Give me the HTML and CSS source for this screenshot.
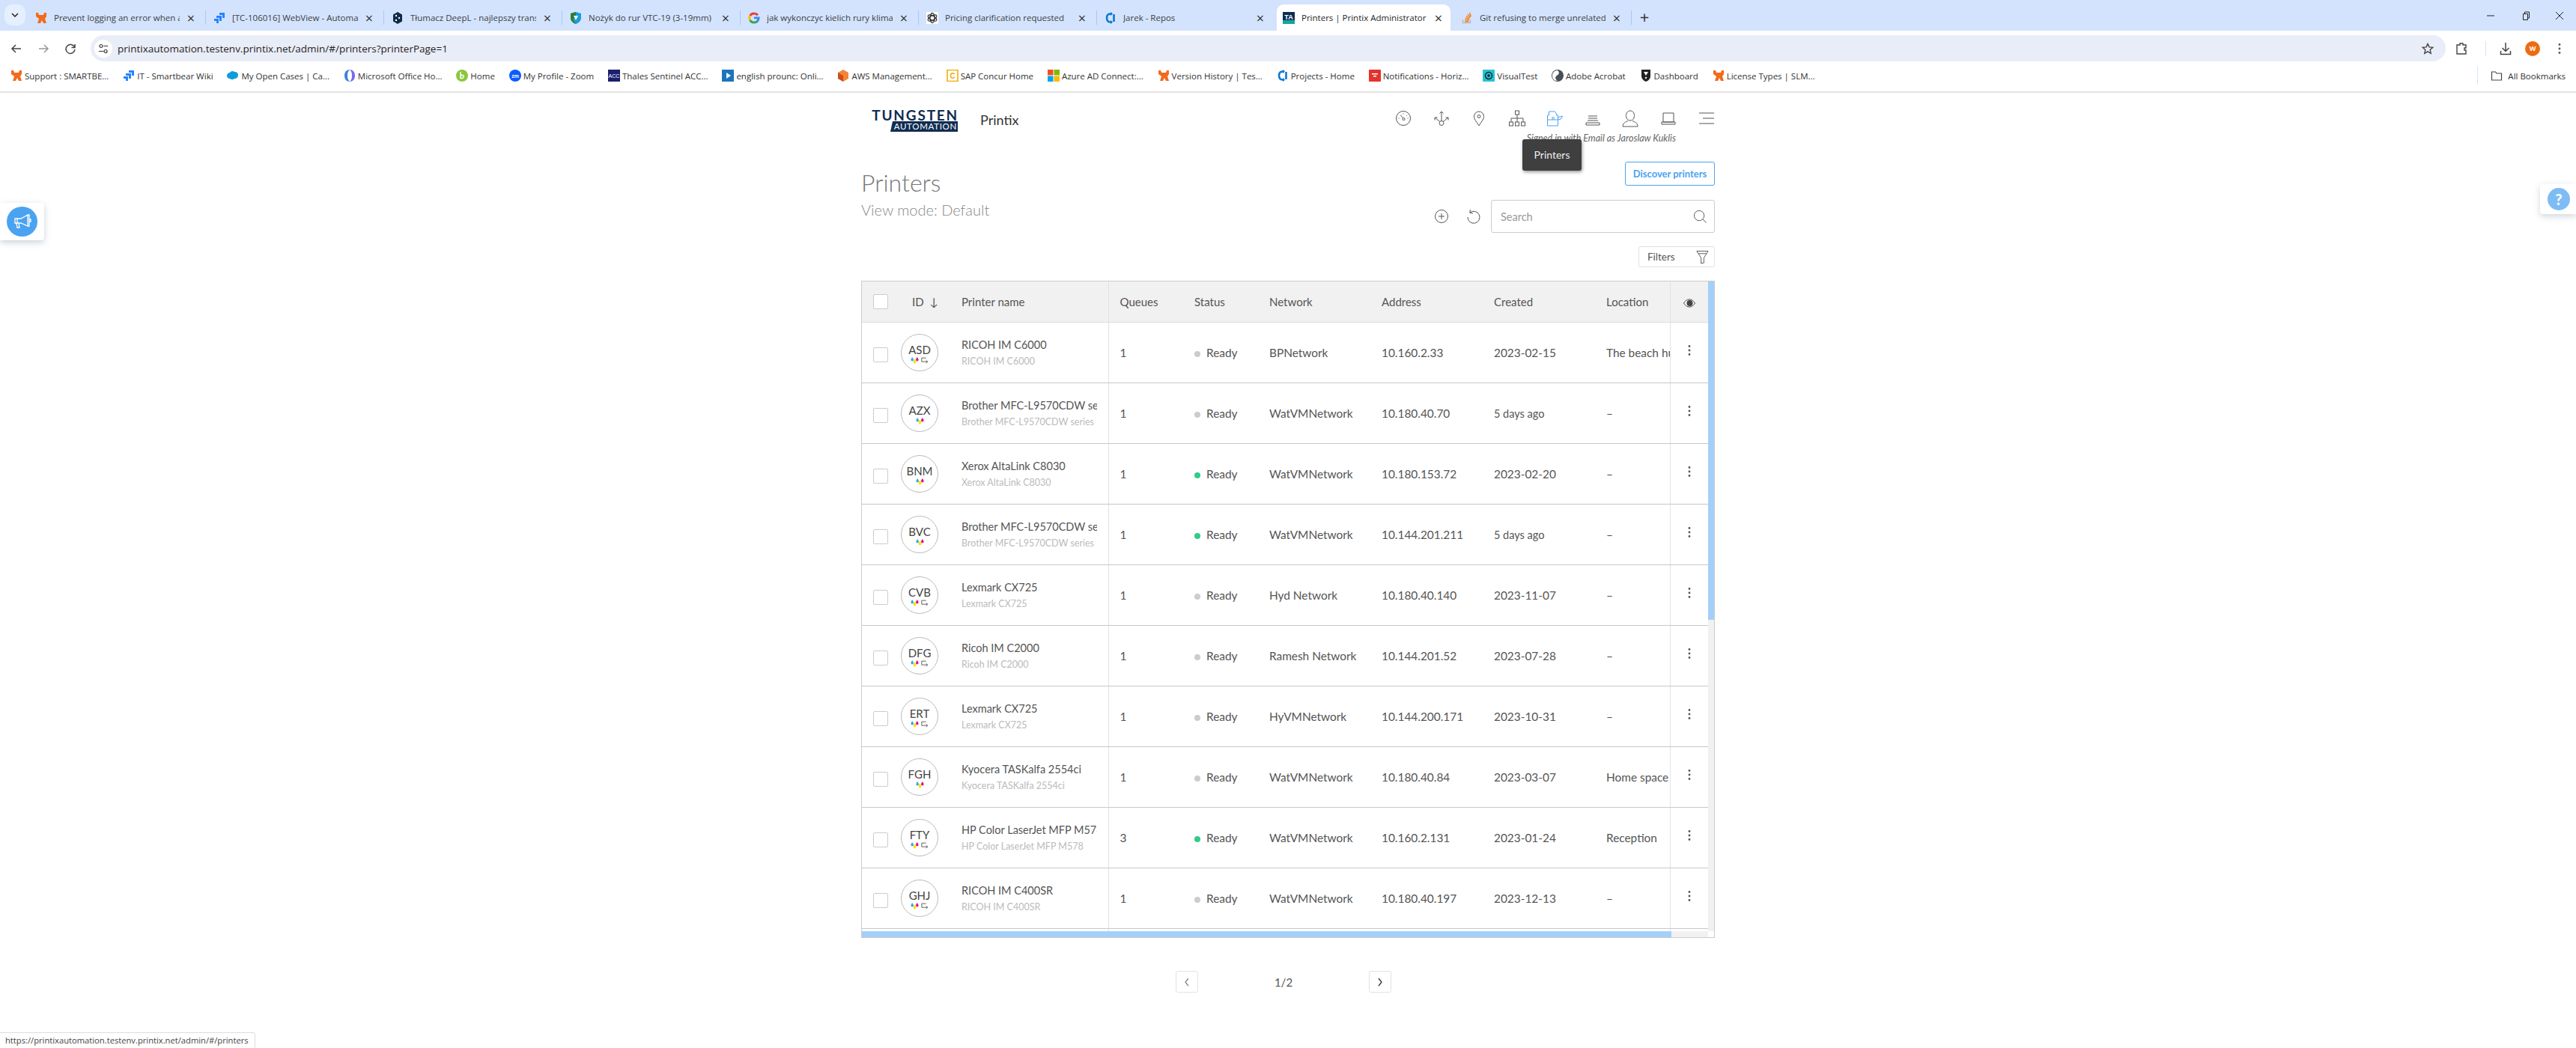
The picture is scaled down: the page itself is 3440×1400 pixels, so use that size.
FILE: index.html
```html
<!DOCTYPE html>
<html>
    <head>
        <meta charset="utf-8" />
        <title>Printers | Printix Administrator</title>
        <meta name="viewport" content="width=device-width, initial-scale=1" />
        <link rel="stylesheet" href="styles.css">
    </head>

    <body>
        <!-- icon sprite -->
        <svg class="sprite" xmlns="http://www.w3.org/2000/svg">
            <symbol id="fav-bear" viewBox="0 0 16 16"><path fill="#f26b1d" d="M1 1h3l1 3h6l1-3h3v5l-2 3 2 6h-4l-2-4-2 4H3l2-6-4-3z"/></symbol>
            <symbol id="fav-jira" viewBox="0 0 16 16"><path fill="#2684ff" d="M8 1h7v7h-3V4H8zM4 5h7v7H8V8H4zM1 9h6v6H4v-3H1z"/></symbol>
            <symbol id="fav-deepl" viewBox="0 0 16 16"><path fill="#0f2b46" d="M8 0l6 3.5v9L8 16l-6-3.5v-9z"/><circle cx="6" cy="5" r="1.2" fill="#fff"/><circle cx="6" cy="11" r="1.2" fill="#fff"/><circle cx="10" cy="8" r="1.2" fill="#fff"/></symbol>
            <symbol id="fav-shield" viewBox="0 0 16 16"><path fill="#1a9cd8" d="M1 2l7-2 7 2v6c0 4-4 7-7 8-3-1-7-4-7-8z"/><path fill="#2e7d32" d="M1 2l7-2v5l-4 5 4 6c-3-1-7-4-7-8z"/><path fill="#fff" d="M5 5h6l-3 6z"/></symbol>
            <symbol id="fav-google" viewBox="0 0 16 16"><path fill="none" stroke="#ea4335" stroke-width="3" d="M13 4.2A6.4 6.4 0 0 0 2.6 5"/><path fill="none" stroke="#fbbc05" stroke-width="3" d="M2.6 5a6.4 6.4 0 0 0 0 6"/><path fill="none" stroke="#34a853" stroke-width="3" d="M2.6 11a6.4 6.4 0 0 0 10.2 1"/><path fill="#4285f4" d="M8 6.600h7.500c.4 3-.6 5-2 6.400l-2.300-1.800c.7-.6 1.100-1.300 1.300-2H8z"/></symbol>
            <symbol id="fav-gpt" viewBox="0 0 16 16"><rect width="16" height="16" fill="#fff"/><g fill="none" stroke="#333" stroke-width="1.300"><ellipse cx="8" cy="8" rx="3" ry="6.500"/><ellipse cx="8" cy="8" rx="3" ry="6.500" transform="rotate(60 8 8)"/><ellipse cx="8" cy="8" rx="3" ry="6.500" transform="rotate(120 8 8)"/></g></symbol>
            <symbol id="fav-azure" viewBox="0 0 16 16"><path fill="none" stroke="#0a78d4" stroke-width="2.600" d="M10 2.500C5 2 3 4 3 8s2 6 7 5.500M12.500 3v10"/><path fill="#0a78d4" d="M8 0l3 2.500L8 5zM8 11l3 2.500L8 16z"/></symbol>
            <symbol id="fav-ta" viewBox="0 0 16 16"><rect width="16" height="16" fill="#0d2d52"/><rect y="11" width="16" height="5" fill="#16a5a0"/><text x="8" y="10" font-family="Liberation Sans" font-size="9" font-weight="700" fill="#fff" text-anchor="middle">TA</text></symbol>
            <symbol id="fav-so" viewBox="0 0 16 16"><path fill="none" stroke="#bbb" stroke-width="1.500" d="M2.500 10v4.500h10V10"/><path fill="none" stroke="#f48024" stroke-width="1.500" d="M5 12.800h5.500M5.200 10.500l5.400.6M5.800 8l5.200 1.500M7 5.300l4.700 2.800M9 3l3.500 4M11.500 1l1.800 5"/></symbol>
            <symbol id="fav-salesforce" viewBox="0 0 16 16"><path fill="#0d9dda" d="M4 4c1-2 4-3 6-1 2-.5 5 1 5 4s-2 5-5 5c-2 2-5 1-6 0-3 0-4-2-4-4s2-4 4-4z"/></symbol>
            <symbol id="fav-office" viewBox="0 0 16 16"><path fill="#7b68ee" d="M8 0c4 0 7 3 7 8s-3 8-7 8c2-2 3-4 3-8S10 2 8 0z"/><path fill="#3b82d6" d="M8 0C4 0 1 3 1 8s3 8 7 8c-2-2-3-4-3-8s1-6 3-8z"/></symbol>
            <symbol id="fav-home" viewBox="0 0 16 16"><circle cx="8" cy="8" r="8" fill="#8cc63f"/><path fill="none" stroke="#fff" stroke-width="1.500" d="M6 3v9M6 8c3-2 5 0 4 2s-3 2-4 1"/></symbol>
            <symbol id="fav-zoom" viewBox="0 0 16 16"><circle cx="8" cy="8" r="8" fill="#0b5cff"/><text x="8" y="10.500" font-family="Liberation Sans" font-size="7" font-weight="700" fill="#fff" text-anchor="middle">zm</text></symbol>
            <symbol id="fav-thales" viewBox="0 0 16 16"><rect width="16" height="16" fill="#1b1f6e"/><text x="8" y="11" font-family="Liberation Sans" font-size="7" fill="#fff" text-anchor="middle">ACC</text></symbol>
            <symbol id="fav-video" viewBox="0 0 16 16"><rect width="16" height="16" fill="#1b75bb"/><path fill="#fff" d="M6 4l6 4-6 4z"/></symbol>
            <symbol id="fav-aws" viewBox="0 0 16 16"><path fill="#f58536" d="M8 0l7 4v8l-7 4-7-4V4z"/><path fill="#c8511b" d="M8 8v8l-7-4V4z"/></symbol>
            <symbol id="fav-sap" viewBox="0 0 16 16"><rect x="1" y="0.500" width="14" height="15" fill="#fff" stroke="#f0ab00" stroke-width="1.500"/><text x="8" y="11.500" font-family="Liberation Sans" font-size="10" font-weight="700" fill="#f0ab00" text-anchor="middle">C</text></symbol>
            <symbol id="fav-ms" viewBox="0 0 16 16"><rect width="7.500" height="7.500" fill="#f25022"/><rect x="8.500" width="7.500" height="7.500" fill="#7fba00"/><rect y="8.500" width="7.500" height="7.500" fill="#00a4ef"/><rect x="8.500" y="8.500" width="7.500" height="7.500" fill="#ffb900"/></symbol>
            <symbol id="fav-notif" viewBox="0 0 16 16"><rect width="16" height="16" rx="1" fill="#e5322d"/><path fill="#fff" d="M4 5h8v1.500H4zM6 8h4v1.500H6z"/></symbol>
            <symbol id="fav-visual" viewBox="0 0 16 16"><rect width="16" height="16" rx="1" fill="#25c3d0"/><circle cx="8" cy="8" r="4.500" fill="none" stroke="#123" stroke-width="1.500"/><circle cx="8" cy="8" r="1.800" fill="#123"/></symbol>
            <symbol id="fav-adobe" viewBox="0 0 16 16"><circle cx="8" cy="8" r="8" fill="#4a4f55"/><path fill="#fff" d="M8 1c3 3 2 5-1 7s-2 5 1 7c-5 0-7-3-7-7s3-7 7-7z"/></symbol>
            <symbol id="fav-dash" viewBox="0 0 16 16"><path fill="#222" d="M2 0h12v9c0 3-3 6-6 7-3-1-6-4-6-7z"/><path fill="#fff" d="M5 3h6l-3 5zM6.500 10h3L8 13z"/></symbol>

            <symbol id="drops" viewBox="0 0 11 9">
                <path fill="#36a9e1" d="M2.200 0c.8 1.500 1.800 2.500 1.800 3.800a1.800 1.800 0 0 1-3.600 0C.4 2.500 1.400 1.500 2.200 0z"/>
                <path fill="#ffe100" d="M5.500 2.500c.8 1.500 1.800 2.500 1.800 4.200a1.800 1.800 0 0 1-3.600 0c0-1.700 1-2.700 1.800-4.200z"/>
                <path fill="#e5127d" d="M8.800 0c.8 1.500 1.800 2.500 1.800 3.800a1.800 1.800 0 0 1-3.600 0c0-1.300 1-2.300 1.800-3.800z"/>
            </symbol>
            <symbol id="swap" viewBox="0 0 12 10"><path fill="none" stroke="#555" stroke-width="1.100" d="M8 1H1v6h9.500M8 4.800l2.500 2.200L8 9.200"/></symbol>
            <symbol id="kebab" viewBox="0 0 4 16"><circle cx="2" cy="2.500" r="1.400" fill="#555"/><circle cx="2" cy="8" r="1.400" fill="#555"/><circle cx="2" cy="13.500" r="1.400" fill="#555"/></symbol>
        </svg>

        <div class="tabstrip">
            <div class="tab-search"><svg width="10" height="6" viewBox="0 0 10 6"><path d="M1 1l4 4 4-4" fill="none" stroke="#222" stroke-width="1.500"/></svg></div>
            <div class="tab"><svg class="fav"><use href="#fav-bear"/></svg><span class="tab-title">Prevent logging an error when a</span><span class="tab-close">×</span></div>
            <div class="tab"><svg class="fav"><use href="#fav-jira"/></svg><span class="tab-title">[TC-106016] WebView - Automa</span><span class="tab-close">×</span></div>
            <div class="tab"><svg class="fav"><use href="#fav-deepl"/></svg><span class="tab-title">Tłumacz DeepL - najlepszy trans</span><span class="tab-close">×</span></div>
            <div class="tab"><svg class="fav"><use href="#fav-shield"/></svg><span class="tab-title">Nożyk do rur VTC-19 (3-19mm)</span><span class="tab-close">×</span></div>
            <div class="tab"><svg class="fav"><use href="#fav-google"/></svg><span class="tab-title">jak wykonczyc kielich rury klima</span><span class="tab-close">×</span></div>
            <div class="tab"><svg class="fav"><use href="#fav-gpt"/></svg><span class="tab-title">Pricing clarification requested</span><span class="tab-close">×</span></div>
            <div class="tab no-sep"><svg class="fav"><use href="#fav-azure"/></svg><span class="tab-title">Jarek - Repos</span><span class="tab-close">×</span></div>
            <div class="tab active"><svg class="fav"><use href="#fav-ta"/></svg><span class="tab-title">Printers | Printix Administrator</span><span class="tab-close">×</span></div>
            <div class="tab"><svg class="fav"><use href="#fav-so"/></svg><span class="tab-title">Git refusing to merge unrelated</span><span class="tab-close">×</span></div>
            <div class="tab-new">+</div>
            <div class="window-controls">
                <svg width="12" height="12" viewBox="0 0 12 12"><path d="M1 6h10" stroke="#222" fill="none"/></svg>
                <svg width="12" height="12" viewBox="0 0 12 12"><path d="M3.500 3.500h6v8h-6zM5.500 3.500V1h6v8h-2" stroke="#222" fill="none"/></svg>
                <svg width="12" height="12" viewBox="0 0 12 12"><path d="M1 1l10 10M11 1L1 11" stroke="#222" fill="none"/></svg>
            </div>
        </div>

        <div class="toolbar">
            <div class="nav-buttons">
                <svg width="16" height="16" viewBox="0 0 16 16"><path d="M14 8H2M7 3L2 8l5 5" fill="none" stroke="#444" stroke-width="1.500"/></svg>
                <svg width="16" height="16" viewBox="0 0 16 16"><path d="M2 8h12M9 3l5 5-5 5" fill="none" stroke="#999" stroke-width="1.500"/></svg>
                <svg width="16" height="16" viewBox="0 0 16 16"><path d="M13.500 6A6 6 0 1 0 14 9M14 2v4.500H9.500" fill="none" stroke="#444" stroke-width="1.500"/></svg>
            </div>
            <div class="omnibox">
                <span class="site-info"><svg width="14" height="14" viewBox="0 0 14 14"><circle cx="4" cy="3.500" r="2" fill="none" stroke="#333" stroke-width="1.200"/><circle cx="10" cy="10.500" r="2" fill="none" stroke="#333" stroke-width="1.200"/><path d="M7.500 3.500H13M1 10.500h6" stroke="#333" stroke-width="1.200"/></svg></span>
                <span class="url">printixautomation.testenv.printix.net/admin/#/printers?printerPage=1</span>
                <svg class="star" width="16" height="16" viewBox="0 0 16 16"><path d="M8 1.500l2 4.400 4.700.5-3.500 3.200 1 4.700L8 11.900l-4.200 2.400 1-4.700L1.300 6.400 6 5.900z" fill="none" stroke="#444" stroke-width="1.400"/></svg>
            </div>
            <div class="toolbar-actions">
                <svg width="16" height="18" viewBox="0 0 16 18"><path d="M2 4h4V2h4v2h4v4h-2v3h2v5H2z" fill="none" stroke="#444" stroke-width="1.400"/></svg>
                <span class="toolbar-sep"></span>
                <svg width="16" height="18" viewBox="0 0 16 18"><path d="M8 1v11M3.500 8L8 12.500 12.500 8M1.500 12v4.500h13V12" fill="none" stroke="#444" stroke-width="1.500"/></svg>
                <span class="profile">W</span>
                <svg width="4" height="16"><use href="#kebab"/></svg>
            </div>
        </div>

        <div class="bookmarks">
            <div class="bookmark"><svg class="fav"><use href="#fav-bear"/></svg>Support : SMARTBE...</div>
            <div class="bookmark"><svg class="fav"><use href="#fav-jira"/></svg>IT - Smartbear Wiki</div>
            <div class="bookmark"><svg class="fav"><use href="#fav-salesforce"/></svg>My Open Cases | Ca...</div>
            <div class="bookmark"><svg class="fav"><use href="#fav-office"/></svg>Microsoft Office Ho...</div>
            <div class="bookmark"><svg class="fav"><use href="#fav-home"/></svg>Home</div>
            <div class="bookmark"><svg class="fav"><use href="#fav-zoom"/></svg>My Profile - Zoom</div>
            <div class="bookmark"><svg class="fav"><use href="#fav-thales"/></svg>Thales Sentinel ACC...</div>
            <div class="bookmark"><svg class="fav"><use href="#fav-video"/></svg>english prounc: Onli...</div>
            <div class="bookmark"><svg class="fav"><use href="#fav-aws"/></svg>AWS Management...</div>
            <div class="bookmark"><svg class="fav"><use href="#fav-sap"/></svg>SAP Concur Home</div>
            <div class="bookmark"><svg class="fav"><use href="#fav-ms"/></svg>Azure AD Connect:...</div>
            <div class="bookmark"><svg class="fav"><use href="#fav-bear"/></svg>Version History | Tes...</div>
            <div class="bookmark"><svg class="fav"><use href="#fav-azure"/></svg>Projects - Home</div>
            <div class="bookmark"><svg class="fav"><use href="#fav-notif"/></svg>Notifications - Horiz...</div>
            <div class="bookmark"><svg class="fav"><use href="#fav-visual"/></svg>VisualTest</div>
            <div class="bookmark"><svg class="fav"><use href="#fav-adobe"/></svg>Adobe Acrobat</div>
            <div class="bookmark"><svg class="fav"><use href="#fav-dash"/></svg>Dashboard</div>
            <div class="bookmark"><svg class="fav"><use href="#fav-bear"/></svg>License Types | SLM...</div>
            <div class="all-bookmarks">
                <svg class="fav" viewBox="0 0 16 16"><path d="M1.500 3h5l1.500 2h6.500v9h-13z" fill="none" stroke="#444" stroke-width="1.200"/></svg>All Bookmarks
            </div>
        </div>

        <div class="feedback-tab">
            <span class="feedback-icon">
                <svg width="26" height="22" viewBox="0 0 26 22"><path d="M3 7h8l9-5v15l-9-4H3zM5 13l1 6h3l-1-6M20 2h2v15h-2M22 8h2v3h-2M6 7v6" fill="none" stroke="#fff" stroke-width="1.300"/></svg>
            </span>
        </div>
        <div class="help-tab"><span class="help-icon">?</span></div>

        <main class="content">
            <header class="site-header">
                <div class="logo">
                    <span class="logo-top">TUNGSTEN</span>
                    <span class="logo-bottom">AUTOMATION</span>
                </div>
                <span class="product">Printix</span>
                <nav class="main-nav">
                    <svg viewBox="0 0 24 24"><circle cx="12" cy="12" r="9.500"/><circle cx="12.500" cy="13" r="1.600"/><path d="M11.500 11.500L8 7.500M5.500 12h1M12 5.500v1M17 8l-.8.8M18.500 12h-1"/></svg>
                    <svg viewBox="0 0 24 24"><circle cx="12" cy="18.500" r="3"/><path d="M12 15.500V3M9.500 5.500L12 3l2.500 2.500M9.800 16.500L3 11M3 14.500V11h3.500M14.200 16.500L21 11M21 14.500V11h-3.500"/></svg>
                    <svg viewBox="0 0 24 24"><path d="M12 22c-2-4-6.500-8-6.500-12.500a6.500 6.500 0 0 1 13 0C18.500 14 14 18 12 22z"/><circle cx="12" cy="9.500" r="2"/></svg>
                    <svg viewBox="0 0 24 24"><rect x="9.500" y="2" width="5" height="5"/><rect x="1.500" y="17" width="5" height="5"/><rect x="9.500" y="17" width="5" height="5"/><rect x="17.500" y="17" width="5" height="5"/><path d="M12 7v10M4 17v-5h16v5"/></svg>
                    <svg class="nav-active" viewBox="0 0 24 24"><path d="M2.500 22V8h2V3h8l2 3v2h2v14zM2.500 14h14M16.500 11l6-2-2 4-4 1"/><path d="M8 11h4M8 13h4"/></svg>
                    <svg viewBox="0 0 24 24"><path d="M6 9h12M6 12h12M5 15h14M3 18h18v3H3z"/></svg>
                    <svg viewBox="0 0 24 24"><path d="M12 2c3.500 0 5.500 3 5.500 6.500S15.500 15 12 15s-5.500-3-5.500-6.500S8.500 2 12 2zM2 23c0-5 4-6 7-7.500M22 23c0-5-4-6-7-7.500M2 23h20"/></svg>
                    <svg viewBox="0 0 24 24"><path d="M5 5h14v12H5zM3 17h18v3H3z"/></svg>
                    <svg viewBox="0 0 24 24"><path d="M3 5h20M8 12h15M3 19h20"/></svg>
                </nav>
            </header>
            <p class="signed-in">Signed in with Email as Jaroslaw Kuklis</p>
            <div class="tooltip">Printers</div>

            <section class="title-row">
                <div class="title-block">
                    <h1>Printers</h1>
                    <p class="view-mode">View mode: Default</p>
                </div>
                <div class="title-actions">
                    <button class="btn-discover">Discover printers</button>
                    <div class="search-row">
                        <svg class="tool-icon" viewBox="0 0 20 20"><circle cx="10" cy="10" r="8.500"/><path d="M10 6v8M6 10h8"/></svg>
                        <svg class="tool-icon" viewBox="0 0 20 20"><path d="M6 5a8 8 0 1 1-3 6M6.500 1L5.800 5.200 10 6"/></svg>
                        <div class="search-box">
                            <span>Search</span>
                            <svg viewBox="0 0 20 20"><circle cx="8.500" cy="8.500" r="7"/><path d="M13.500 13.500l5 5"/></svg>
                        </div>
                    </div>
                    <button class="btn-filters">Filters
                        <svg viewBox="0 0 18 20"><path d="M1 1.500h16L11 11v7l-4 1V11zM3.500 5h11"/></svg>
                    </button>
                </div>
            </section>

            <div class="grid-frame">
                <div class="grid-main">
                    <div class="grid-scroll">
                        <table class="printers">
                            <colgroup>
                                <col class="col-check" /><col class="col-avatar" /><col class="col-name" />
                                <col class="col-100" /><col class="col-100" /><col class="col-150" />
                                <col class="col-150" /><col class="col-150" /><col class="col-100" /><col class="col-actions" />
                            </colgroup>
                            <thead>
                                <tr>
                                    <th><span class="checkbox"></span></th>
                                    <th class="th-id">ID <span class="sort">↓</span></th>
                                    <th class="cell-name">Printer name</th>
                                    <th>Queues</th><th>Status</th><th>Network</th><th>Address</th><th>Created</th><th>Location</th>
                                    <th class="cell-actions"><svg class="eye" viewBox="0 0 16 12"><path d="M.5 6C3 2 5.500 1 8 1s5 1 7.500 5C13 10 10.500 11 8 11S3 10 .5 6z" fill="none" stroke="#444"/><circle cx="8.500" cy="6" r="4" fill="#444"/></svg></th>
                                </tr>
                            </thead>
                            <tbody>
                                <tr>
                                    <td><span class="checkbox"></span></td>
                                    <td><div class="avatar">ASD<div class="avatar-icons"><svg class="drops"><use href="#drops"/></svg><svg class="swap"><use href="#swap"/></svg></div></div></td>
                                    <td class="cell-name"><div class="name">RICOH IM C6000</div><div class="model">RICOH IM C6000</div></td>
                                    <td>1</td><td><span class="dot"></span>Ready</td><td>BPNetwork</td><td>10.160.2.33</td><td>2023-02-15</td><td class="clip">The beach hut</td>
                                    <td class="cell-actions"><svg class="kebab"><use href="#kebab"/></svg></td>
                                </tr>
                                <tr>
                                    <td><span class="checkbox"></span></td>
                                    <td><div class="avatar">AZX<div class="avatar-icons"><svg class="drops"><use href="#drops"/></svg></div></div></td>
                                    <td class="cell-name"><div class="name">Brother MFC-L9570CDW series</div><div class="model">Brother MFC-L9570CDW series</div></td>
                                    <td>1</td><td><span class="dot"></span>Ready</td><td>WatVMNetwork</td><td>10.180.40.70</td><td class="small">5 days ago</td><td>–</td>
                                    <td class="cell-actions"><svg class="kebab"><use href="#kebab"/></svg></td>
                                </tr>
                                <tr>
                                    <td><span class="checkbox"></span></td>
                                    <td><div class="avatar">BNM<div class="avatar-icons"><svg class="drops"><use href="#drops"/></svg></div></div></td>
                                    <td class="cell-name"><div class="name">Xerox AltaLink C8030</div><div class="model">Xerox AltaLink C8030</div></td>
                                    <td>1</td><td><span class="dot online"></span>Ready</td><td>WatVMNetwork</td><td>10.180.153.72</td><td>2023-02-20</td><td>–</td>
                                    <td class="cell-actions"><svg class="kebab"><use href="#kebab"/></svg></td>
                                </tr>
                                <tr>
                                    <td><span class="checkbox"></span></td>
                                    <td><div class="avatar">BVC<div class="avatar-icons"><svg class="drops"><use href="#drops"/></svg></div></div></td>
                                    <td class="cell-name"><div class="name">Brother MFC-L9570CDW series</div><div class="model">Brother MFC-L9570CDW series</div></td>
                                    <td>1</td><td><span class="dot online"></span>Ready</td><td>WatVMNetwork</td><td>10.144.201.211</td><td class="small">5 days ago</td><td>–</td>
                                    <td class="cell-actions"><svg class="kebab"><use href="#kebab"/></svg></td>
                                </tr>
                                <tr>
                                    <td><span class="checkbox"></span></td>
                                    <td><div class="avatar">CVB<div class="avatar-icons"><svg class="drops"><use href="#drops"/></svg><svg class="swap"><use href="#swap"/></svg></div></div></td>
                                    <td class="cell-name"><div class="name">Lexmark CX725</div><div class="model">Lexmark CX725</div></td>
                                    <td>1</td><td><span class="dot"></span>Ready</td><td>Hyd Network</td><td>10.180.40.140</td><td>2023-11-07</td><td>–</td>
                                    <td class="cell-actions"><svg class="kebab"><use href="#kebab"/></svg></td>
                                </tr>
                                <tr>
                                    <td><span class="checkbox"></span></td>
                                    <td><div class="avatar">DFG<div class="avatar-icons"><svg class="drops"><use href="#drops"/></svg><svg class="swap"><use href="#swap"/></svg></div></div></td>
                                    <td class="cell-name"><div class="name">Ricoh IM C2000</div><div class="model">Ricoh IM C2000</div></td>
                                    <td>1</td><td><span class="dot"></span>Ready</td><td>Ramesh Network</td><td>10.144.201.52</td><td>2023-07-28</td><td>–</td>
                                    <td class="cell-actions"><svg class="kebab"><use href="#kebab"/></svg></td>
                                </tr>
                                <tr>
                                    <td><span class="checkbox"></span></td>
                                    <td><div class="avatar">ERT<div class="avatar-icons"><svg class="drops"><use href="#drops"/></svg><svg class="swap"><use href="#swap"/></svg></div></div></td>
                                    <td class="cell-name"><div class="name">Lexmark CX725</div><div class="model">Lexmark CX725</div></td>
                                    <td>1</td><td><span class="dot"></span>Ready</td><td>HyVMNetwork</td><td>10.144.200.171</td><td>2023-10-31</td><td>–</td>
                                    <td class="cell-actions"><svg class="kebab"><use href="#kebab"/></svg></td>
                                </tr>
                                <tr>
                                    <td><span class="checkbox"></span></td>
                                    <td><div class="avatar">FGH<div class="avatar-icons"><svg class="drops"><use href="#drops"/></svg></div></div></td>
                                    <td class="cell-name"><div class="name">Kyocera TASKalfa 2554ci</div><div class="model">Kyocera TASKalfa 2554ci</div></td>
                                    <td>1</td><td><span class="dot"></span>Ready</td><td>WatVMNetwork</td><td>10.180.40.84</td><td>2023-03-07</td><td class="clip">Home space</td>
                                    <td class="cell-actions"><svg class="kebab"><use href="#kebab"/></svg></td>
                                </tr>
                                <tr>
                                    <td><span class="checkbox"></span></td>
                                    <td><div class="avatar">FTY<div class="avatar-icons"><svg class="drops"><use href="#drops"/></svg><svg class="swap"><use href="#swap"/></svg></div></div></td>
                                    <td class="cell-name"><div class="name">HP Color LaserJet MFP M578</div><div class="model">HP Color LaserJet MFP M578</div></td>
                                    <td>3</td><td><span class="dot online"></span>Ready</td><td>WatVMNetwork</td><td>10.160.2.131</td><td>2023-01-24</td><td>Reception</td>
                                    <td class="cell-actions"><svg class="kebab"><use href="#kebab"/></svg></td>
                                </tr>
                                <tr>
                                    <td><span class="checkbox"></span></td>
                                    <td><div class="avatar">GHJ<div class="avatar-icons"><svg class="drops"><use href="#drops"/></svg><svg class="swap"><use href="#swap"/></svg></div></div></td>
                                    <td class="cell-name"><div class="name">RICOH IM C400SR</div><div class="model">RICOH IM C400SR</div></td>
                                    <td>1</td><td><span class="dot"></span>Ready</td><td>WatVMNetwork</td><td>10.180.40.197</td><td>2023-12-13</td><td>–</td>
                                    <td class="cell-actions"><svg class="kebab"><use href="#kebab"/></svg></td>
                                </tr>
                                <tr class="row-stub"><td></td><td></td><td class="cell-name"></td><td></td><td></td><td></td><td></td><td></td><td></td><td class="cell-actions"></td></tr>
                            </tbody>
                        </table>
                    </div>
                    <div class="vscroll"><div class="vscroll-thumb"></div></div>
                </div>
                <div class="hscroll"><div class="hscroll-thumb"></div></div>
            </div>

            <div class="pagination">
                <button class="page-btn"><svg viewBox="0 0 8 12"><path d="M6 1L2 6l4 5" fill="none" stroke="#888" stroke-width="1.300"/></svg></button>
                <span class="page-label">1/2</span>
                <button class="page-btn"><svg viewBox="0 0 8 12"><path d="M2 1l4 5-4 5" fill="none" stroke="#333" stroke-width="1.300"/></svg></button>
            </div>
        </main>

        <div class="status-link">https://printixautomation.testenv.printix.net/admin/#/printers</div>
    </body>
</html>
```

FILE: styles.css
```css
html,
body {
    margin: 0;
    padding: 0;
    height: 1400px;
    overflow: hidden;
    background: #fff;
    font-family: 'Lato', sans-serif;
    color: #555;
}

.sprite {
    display: none;
}

.fav {
    width: 16px;
    height: 16px;
    flex: none;
}

/* browser chrome */
.tabstrip {
    height: 41px;
    background: #d3e3fd;
    display: flex;
    align-items: flex-end;
    font-family: 'Open Sans', sans-serif;
    font-size: 11.500px;
    color: #3c4043;
}

.tab-search {
    width: 28px;
    height: 28px;
    margin: 0 3px 7px 6px;
    border-radius: 10px;
    background: #e6effd;
    display: flex;
    align-items: center;
    justify-content: center;
    flex: none;
}

.tab {
    width: 238px;
    height: 35px;
    box-sizing: border-box;
    padding: 0 10px;
    display: flex;
    align-items: center;
    gap: 9px;
    flex: none;
    position: relative;
}

.tab::after {
    content: '';
    position: absolute;
    right: 0;
    top: 8px;
    height: 19px;
    width: 1px;
    background: #a8c7fa;
}

.tab.no-sep::after,
.tab.active::after {
    display: none;
}

.tab.active {
    background: #fff;
    border-radius: 9px 9px 0 0;
    width: 232px;
    margin: 0 4px 0 2px;
    padding: 0 8px;
    color: #1f1f1f;
}

.tab-title {
    width: 168px;
    overflow: hidden;
    white-space: nowrap;
    flex: none;
}

.tab-close {
    width: 12px;
    font-size: 18px;
    line-height: 12px;
    text-align: center;
    color: #333;
}

.tab-new {
    width: 34px;
    height: 35px;
    font-size: 22px;
    line-height: 33px;
    text-align: center;
    color: #333;
}

.window-controls {
    margin-left: auto;
    height: 41px;
    display: flex;
    align-items: center;
    gap: 34px;
    padding-right: 16px;
}

.toolbar {
    height: 41px;
    display: flex;
    align-items: flex-start;
    padding-top: 6px;
    box-sizing: border-box;
    border-radius: 10px 10px 0 0;
}

.nav-buttons {
    width: 121px;
    height: 35px;
    box-sizing: border-box;
    padding: 0 19px 0 14px;
    display: flex;
    align-items: center;
    justify-content: space-between;
    flex: none;
}

.omnibox {
    width: 3145px;
    height: 35px;
    background: #e9edf7;
    border-radius: 18px;
    display: flex;
    align-items: center;
    box-sizing: border-box;
    padding: 0 16px 0 5px;
    flex: none;
    font-family: 'Open Sans', sans-serif;
    font-size: 13.500px;
    color: #1f1f1f;
}

.site-info {
    width: 24px;
    height: 24px;
    border-radius: 50%;
    background: #fff;
    display: flex;
    align-items: center;
    justify-content: center;
    margin-right: 7px;
}

.star {
    margin-left: auto;
}

.toolbar-actions {
    flex: 1;
    height: 35px;
    display: flex;
    align-items: center;
    padding-left: 13px;
}

.toolbar-sep {
    width: 1px;
    height: 20px;
    background: #d3e3fd;
    margin: 0 18px 0 24px;
}

.profile {
    width: 20px;
    height: 20px;
    border-radius: 50%;
    background: #ec6c13;
    color: #fff;
    font: 700 9px 'Open Sans', sans-serif;
    text-align: center;
    line-height: 20px;
    margin: 0 24px 0 18px;
}

.bookmarks {
    height: 42px;
    box-sizing: border-box;
    border-bottom: 2px solid #e3e3e3;
    padding: 0 0 2px 14px;
    display: flex;
    align-items: center;
    gap: 18.800px;
    font-family: 'Open Sans', sans-serif;
    font-size: 11.500px;
    color: #333;
}

.bookmark {
    display: flex;
    align-items: center;
    gap: 3px;
    white-space: nowrap;
}

.all-bookmarks {
    margin-left: auto;
    margin-right: 14px;
    display: flex;
    align-items: center;
    gap: 7px;
    border-left: 1px solid #d3e3fd;
    padding: 4px 0 4px 17px;
}

/* floating side widgets */
.feedback-tab {
    position: absolute;
    left: 0;
    top: 271px;
    width: 59px;
    height: 50px;
    background: #fff;
    border-radius: 0 4px 4px 0;
    box-shadow: 0 3px 8px rgba(70, 90, 120, 0.28);
    display: flex;
    align-items: center;
}

.feedback-icon {
    margin-left: 9px;
    width: 41px;
    height: 40px;
    border-radius: 50%;
    background: #4aa3f0;
    display: flex;
    align-items: center;
    justify-content: center;
}

.help-tab {
    position: absolute;
    right: 0;
    top: 246px;
    width: 48px;
    height: 40px;
    background: #fff;
    border-radius: 4px 0 0 4px;
    box-shadow: 0 3px 8px rgba(70, 90, 120, 0.25);
    display: flex;
    align-items: center;
}

.help-icon {
    margin-left: 10px;
    width: 30px;
    height: 30px;
    border-radius: 50%;
    background: #7ebcf5;
    color: #fff;
    font: 900 20px/30px 'Lato', sans-serif;
    text-align: center;
}

/* page */
.content {
    width: 1140px;
    margin: 0 auto;
    position: relative;
}

.site-header {
    height: 52px;
    box-sizing: border-box;
    padding: 23px 0 0 11px;
    display: flex;
    align-items: flex-start;
}

.logo {
    width: 118px;
    height: 29px;
    display: flex;
    flex-direction: column;
    align-items: flex-end;
    flex: none;
}

.logo-top {
    font: 700 19px/14px 'Lato', sans-serif;
    color: #0f2d52;
    letter-spacing: 1.800px;
    margin-right: -1px;
}

.logo-bottom {
    margin-top: 1px;
    width: 90px;
    height: 14px;
    background: #0f2d52;
    color: #fff;
    font: 400 11.500px/14px 'Lato', sans-serif;
    letter-spacing: 0.700px;
    text-align: right;
    padding-right: 1px;
    box-sizing: border-box;
    clip-path: polygon(3px 0, 100% 0, 100% 100%, 0 100%);
}

.product {
    margin-left: 30px;
    font-size: 18px;
    line-height: 26px;
    color: #333;
}

.main-nav {
    margin-left: auto;
    margin-top: -1px;
    display: flex;
    gap: 26.500px;
}

.main-nav svg {
    width: 24px;
    height: 24px;
    fill: none;
    stroke: #555;
    stroke-width: 1;
}

.main-nav .nav-active {
    stroke: #4aa3f0;
}

.signed-in {
    margin: 0;
    height: 18px;
    padding-right: 52px;
    text-align: right;
    font-size: 12.500px;
    line-height: 18px;
    font-style: italic;
    color: #666;
}

.tooltip {
    position: absolute;
    left: 883px;
    top: 62px;
    width: 79px;
    height: 42px;
    background: #3f3f3f;
    color: #eee;
    border-radius: 3px;
    font-size: 14px;
    line-height: 42px;
    text-align: center;
    box-shadow: 1px 2px 4px rgba(0, 0, 0, 0.4);
}

.title-row {
    margin-top: 22px;
    display: flex;
    justify-content: space-between;
}

.title-block {
    padding-top: 5px;
}

h1 {
    margin: 0;
    font-size: 32px;
    line-height: 46px;
    font-weight: 300;
    color: #777;
}

.view-mode {
    margin: 0;
    font-size: 20px;
    line-height: 26px;
    font-weight: 300;
    color: #888;
}

.title-actions {
    display: flex;
    flex-direction: column;
    align-items: flex-end;
    padding-bottom: 18px;
}

button {
    font-family: inherit;
    background: #fff;
    cursor: pointer;
}

.btn-discover {
    width: 120px;
    height: 32px;
    padding: 0;
    border: 1px solid #4aa3f0;
    border-radius: 3px;
    color: #4aa3f0;
    font-size: 13px;
    font-weight: 700;
}

.search-row {
    margin-top: 19px;
    display: flex;
    align-items: center;
}

.tool-icon {
    width: 20px;
    height: 20px;
    margin-right: 22px;
    fill: none;
    stroke: #555;
    stroke-width: 1;
}

.tool-icon + .tool-icon {
    margin-right: 14px;
}

.search-box {
    width: 299px;
    height: 44px;
    box-sizing: border-box;
    border: 1px solid #ccc;
    border-radius: 3px;
    display: flex;
    align-items: center;
    justify-content: space-between;
    padding: 0 9px 0 12px;
    font-size: 14.500px;
    color: #999;
}

.search-box svg {
    width: 19px;
    height: 19px;
    fill: none;
    stroke: #555;
    stroke-width: 1;
}

.btn-filters {
    margin-top: 18px;
    width: 102px;
    height: 28px;
    box-sizing: border-box;
    border: 1px solid #e2e2e2;
    border-radius: 2px;
    padding: 0 7px 0 11px;
    display: flex;
    align-items: center;
    justify-content: space-between;
    font-size: 13.500px;
    color: #555;
}

.btn-filters svg {
    width: 17px;
    height: 19px;
    fill: none;
    stroke: #555;
    stroke-width: 1;
}

/* printers grid */
.grid-frame {
    height: 878px;
    box-sizing: border-box;
    border: 1px solid #ccc;
    display: flex;
    flex-direction: column;
}

.grid-main {
    height: 868px;
    display: flex;
}

.grid-scroll {
    width: 1130px;
    overflow: hidden;
}

.printers {
    width: 1130px;
    table-layout: fixed;
    border-collapse: collapse;
    font-size: 15.400px;
    color: #555;
}

.col-check { width: 40px; }
.col-avatar { width: 78px; }
.col-name { width: 211px; }
.col-100 { width: 100px; }
.col-150 { width: 150px; }
.col-actions { width: 51px; }

.printers th,
.printers td {
    padding: 0 0 0 15px;
    text-align: left;
    white-space: nowrap;
    overflow: hidden;
}

.printers th {
    height: 54px;
    background: #f1f1f1;
    font-size: 15px;
    font-weight: 400;
    border-bottom: 1px solid #ddd;
}

.printers td {
    height: 80px;
    border-bottom: 1px solid #c8c8c8;
}

.printers .cell-name {
    padding-right: 15px;
    border-right: 1px solid #e2e2e2;
}

.printers .cell-actions {
    padding: 0;
    text-align: center;
    border-left: 1px solid #e2e2e2;
}

.printers .th-id {
    padding-left: 27px;
}

.sort {
    margin-left: 4px;
}

.printers .small {
    font-size: 14.500px;
}

.printers .clip {
    text-overflow: clip;
}

.row-stub td {
    height: 20px;
}

.checkbox {
    display: block;
    width: 20px;
    height: 20px;
    box-sizing: border-box;
    background: #fff;
    border: 1px solid #ccc;
    border-radius: 2px;
}

.printers td:first-child .checkbox {
    margin-top: 5px;
}

.avatar {
    width: 50px;
    height: 50px;
    box-sizing: border-box;
    margin-left: -3px;
    border: 1px solid #bbb;
    border-radius: 50%;
    font-size: 15px;
    line-height: 18px;
    padding-top: 11px;
    text-align: center;
    color: #444;
}

.avatar-icons {
    display: flex;
    justify-content: center;
    align-items: center;
    gap: 3px;
    height: 10px;
}

.drops {
    width: 11px;
    height: 9px;
}

.swap {
    width: 10px;
    height: 9px;
}

.name {
    font-size: 14.500px;
    line-height: 20px;
    overflow: hidden;
    margin-top: -1px;
}

.model {
    margin-top: 4px;
    font-size: 12.500px;
    line-height: 16px;
    color: #bbb;
    overflow: hidden;
}

.dot {
    display: inline-block;
    width: 8px;
    height: 8px;
    margin-right: 8px;
    border-radius: 50%;
    background: #ccc;
    vertical-align: 0;
}

.dot.online {
    background: #2ecc8b;
}

.kebab {
    width: 4px;
    height: 16px;
    vertical-align: 3px;
}

.eye {
    width: 16px;
    height: 12px;
    vertical-align: middle;
}

.vscroll {
    width: 8px;
    background: #f1f1f1;
    flex: none;
}

.vscroll-thumb {
    height: 452px;
    background: #a3d0fa;
}

.hscroll {
    height: 8px;
    margin-right: 8px;
    background: #f1f1f1;
}

.hscroll-thumb {
    width: 1081px;
    height: 8px;
    background: #a3d0fa;
}

.pagination {
    width: 288px;
    margin: 44px 0 0 420px;
    display: flex;
    align-items: center;
    justify-content: space-between;
}

.page-btn {
    width: 30px;
    height: 29px;
    padding: 0;
    border: 1px solid #e2e2e2;
    border-radius: 3px;
    display: flex;
    align-items: center;
    justify-content: center;
}

.page-btn svg {
    width: 8px;
    height: 12px;
}

.page-label {
    font-size: 15px;
}

.status-link {
    position: absolute;
    left: 0;
    bottom: 0;
    height: 20px;
    padding: 0 8px 0 7px;
    background: #fff;
    border: 1px solid #ddd;
    border-width: 1px 1px 0 0;
    border-top-right-radius: 4px;
    font: 11.200px/20px 'Open Sans', sans-serif;
    color: #444;
}
```
